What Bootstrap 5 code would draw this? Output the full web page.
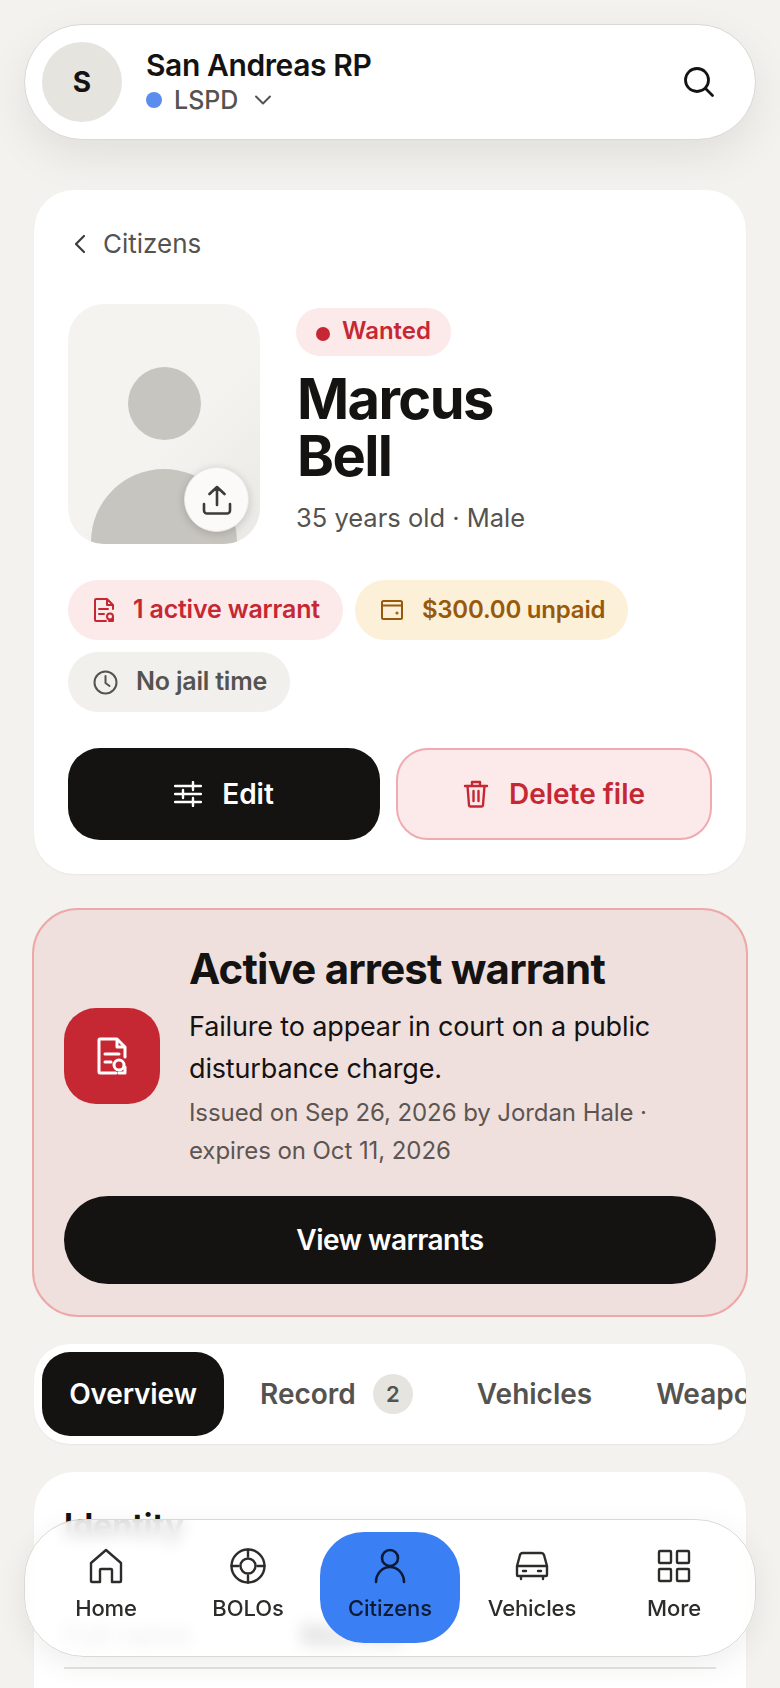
<!DOCTYPE html>
<html lang="en">
<head>
<meta charset="utf-8">
<title>Marcus Bell</title>
<link href="https://cdn.jsdelivr.net/npm/bootstrap@5.3.0/dist/css/bootstrap.min.css" rel="stylesheet">
<style>
html,body{height:1688px;overflow:hidden}
body{background:#f3f2ef;font-family:Inter,"Liberation Sans",sans-serif;color:#141312;position:relative}
.shell{padding:24px 32px 0;height:1688px;overflow:hidden}
.topbar{margin:0 -8px;height:116px;border-radius:58px;background:#fff;border:1px solid #d9d8d3;padding:0 39px 0 17px;box-shadow:0 16px 44px rgba(20,19,18,.08)}
.ava{width:80px;height:80px;border-radius:50%;background:#e6e4df;font-size:28px;font-weight:700}
.org{font-size:30px;font-weight:600;letter-spacing:-.4px;line-height:34px}
.sub{font-size:25px;font-weight:500;color:#55534f;line-height:32px;margin-top:2px}
.blue{width:16px;height:16px;border-radius:50%;background:#5b8def;margin-right:12px}
.panel{background:#fff;border-radius:40px;box-shadow:0 1px 2px rgba(20,19,18,.05)}
.hero{margin:50px 2px 0;height:684px;padding:36px 34px 34px}
.back{font-size:26px;line-height:36px;color:#55534f;margin-left:5px}
.photo{width:192px;height:240px;border-radius:36px;background:linear-gradient(135deg,#f4f3f0 55%,#e9e8e4);position:relative;overflow:hidden;flex:none}
.photowrap{position:relative;flex:none}
.head{position:absolute;left:60px;top:63px;width:73px;height:73px;border-radius:50%;background:#c7c5bf}
.bod{position:absolute;left:23px;top:165px;width:146px;height:146px;border-radius:50%;background:#c7c5bf}
.upl{position:absolute;left:116px;top:163px;width:65px;height:65px;border-radius:50%;background:#fbfaf8;box-shadow:0 2px 8px rgba(20,19,18,.18);border:1px solid #e8e7e3}
.wanted{height:48px;border-radius:24px;background:#fce9ea;color:#c62833;font-size:24px;font-weight:600;padding:0 20px 3px;gap:12px;width:fit-content}
.rdot{width:14px;height:14px;border-radius:50%;background:#c62833;margin-top:6px}
.name{font-size:56px;line-height:57px;font-weight:700;letter-spacing:-1.6px;margin:15px 0 0 1px}
.age{font-size:25.5px;line-height:36px;color:#55534f;margin-top:15px}
.pills{gap:12px;margin-top:36px}
.pilly{height:60px;border-radius:30px;font-weight:600;gap:18px;padding:0 23px 0 25px;letter-spacing:-.2px}
.p-red{background:#fce9ea;color:#c62833;font-size:25px}
.p-amb{background:#fdf0d9;color:#99590a;font-size:24px}
.p-gry{background:#f1f0ed;color:#55534f;font-size:25px}
.acts{gap:16px;margin-top:36px}
.bigbtn{flex:1;height:92px;border-radius:32px;font-size:28px;font-weight:600;gap:20px}
.bigbtn.dark,.pillbtn{background:#141312;color:#fff;border:0}
.bigbtn.dark:hover,.pillbtn:hover{background:#141312;color:#fff}
.bigbtn.del{background:#fce9ea;color:#c62833;border:2px solid #efabb0}
.warn{margin:34px 0 0;height:409px;border-radius:46px;background:#f0e0dd;border:2px solid #eda9a9;padding:32px 30px 0}
.wicon{width:96px;height:96px;border-radius:32px;background:#c62833;flex:none}
.wt{font-size:42px;line-height:54px;font-weight:700;letter-spacing:-.8px}
.wb{font-size:27px;line-height:42px;margin-top:10px;letter-spacing:-.15px}
.ws{font-size:24px;line-height:38px;color:#5c5551;margin-top:4px;letter-spacing:-.08px}
.pillbtn{display:block;width:100%;height:88px;border-radius:44px;font-size:28px;font-weight:600;margin-top:26px;letter-spacing:-.55px}
.tabs{margin:27px 2px 0;height:100px;border-radius:36px;padding:8px;gap:36px;overflow:hidden;font-size:28px;font-weight:600;color:#55534f;white-space:nowrap}
.tabon{width:182px;height:84px;border-radius:28px;background:#141312;color:#fff;flex:none;margin-right:0;letter-spacing:-.15px}
.tcount{width:40px;height:40px;border-radius:50%;background:#e6e4df;font-size:22px;margin-left:17px}
.idcard{margin:28px 2px 0;height:400px;padding:34px 30px}
.idt{font-size:32px;font-weight:700;line-height:40px}
.idrow{padding-top:74px;padding-bottom:17px;border-bottom:2px solid #e6e4df;font-size:28px;line-height:30px;color:#8b8a85;white-space:nowrap}
.idrow b{color:#141312;margin-left:110px;font-weight:700}
.dock{position:absolute;left:24px;top:1519px;width:732px;height:138px;border-radius:60px;background:rgba(255,255,255,.82);backdrop-filter:blur(8px);border:1px solid #d9d8d3;box-shadow:0 8px 30px rgba(20,19,18,.07);padding:12px 11px;gap:2px}
.dockitem{flex:1;height:111px;border-radius:44px;font-size:22px;font-weight:550;letter-spacing:-.1px;color:#2d2c2a;gap:8px;padding-top:16px}
.dockitem.on{background:#3b7ff5;color:#0d1a33}
</style>
</head>
<body>
<div class="shell">
  <header class="topbar d-flex align-items-center">
    <div class="ava d-flex align-items-center justify-content-center">S</div>
    <div class="ms-4 flex-grow-1">
      <div class="org">San Andreas RP</div>
      <div class="sub d-flex align-items-center"><span class="blue"></span>LSPD
        <svg class="ms-3" width="18" height="18" viewBox="0 0 18 18" fill="none" stroke="#55534f" stroke-width="2" stroke-linecap="round" stroke-linejoin="round"><path d="M2 5.5l7 7 7-7"/></svg>
      </div>
    </div>
    <svg width="34" height="34" viewBox="0 0 34 34" fill="none" stroke="#141312" stroke-width="2.8" stroke-linecap="round"><circle cx="15" cy="15" r="11.5"/><path d="M23.5 23.5l7 7"/></svg>
  </header>

  <section class="panel hero">
    <div class="back d-flex align-items-center gap-3">
      <svg width="14" height="20" viewBox="0 0 14 20" fill="none" stroke="#3c3b38" stroke-width="2.2" stroke-linecap="round" stroke-linejoin="round"><path d="M11 2L3 10l8 8"/></svg>
      <span>Citizens</span>
    </div>
    <div class="d-flex" style="margin-top:42px">
      <div class="photowrap">
        <div class="photo"><div class="head"></div><div class="bod"></div></div>
        <div class="upl d-flex align-items-center justify-content-center">
          <svg width="30" height="32" viewBox="0 0 30 32" fill="none" stroke="#3c3b38" stroke-width="2.6" stroke-linecap="round" stroke-linejoin="round"><path d="M15 21V3M7.5 10L15 3l7.5 7M2 20v6.500a3 3 0 0 0 3 3h20a3 3 0 0 0 3-3V20"/></svg>
        </div>
      </div>
      <div style="margin-left:36px;margin-top:4px">
        <div class="wanted d-flex align-items-center"><span class="rdot"></span>Wanted</div>
        <div class="name">Marcus<br>Bell</div>
        <div class="age">35 years old · Male</div>
      </div>
    </div>
    <div class="pills d-flex flex-wrap">
      <div class="pilly p-red d-flex align-items-center">
        <svg width="22" height="26" viewBox="0 0 22 26" fill="none" stroke="currentColor" stroke-width="2" stroke-linecap="round" stroke-linejoin="round"><path d="M20 12V8l-6-6H3a1 1 0 0 0-1 1v20a1 1 0 0 0 1 1h10M14 2v6h6M6 12h9M6 17h5"/><circle cx="17" cy="19.500" r="3"/><path d="M20 20v4h-4"/></svg>
        <span>1 active warrant</span>
      </div>
      <div class="pilly p-amb d-flex align-items-center">
        <svg width="24" height="24" viewBox="0 0 24 24" fill="none" stroke="currentColor" stroke-width="2" stroke-linecap="round" stroke-linejoin="round"><rect x="2" y="3" width="20" height="18" rx="1.500"/><path d="M2 7.500h20"/><circle cx="17" cy="15" r=".6"/></svg>
        <span>$300.00 unpaid</span>
      </div>
      <div class="pilly p-gry d-flex align-items-center">
        <svg width="25" height="25" viewBox="0 0 25 25" fill="none" stroke="currentColor" stroke-width="2" stroke-linecap="round" stroke-linejoin="round"><circle cx="12.500" cy="12.500" r="11"/><path d="M12.500 6v7l4 3"/></svg>
        <span>No jail time</span>
      </div>
    </div>
    <div class="acts d-flex">
      <button class="btn bigbtn dark d-flex align-items-center justify-content-center" type="button">
        <svg width="28" height="26" viewBox="0 0 28 26" fill="none" stroke="#fff" stroke-width="2.400" stroke-linecap="round"><path d="M1 5h26M1 13h26M1 21h26M19 1v8M9 9v8M19 17v8"/></svg>
        Edit
      </button>
      <button class="btn bigbtn del d-flex align-items-center justify-content-center" type="button">
        <svg width="26" height="28" viewBox="0 0 26 28" fill="none" stroke="currentColor" stroke-width="2.400" stroke-linecap="round" stroke-linejoin="round"><path d="M2 6h22M9 6V2h8v4M4.500 6l1.500 19a1.500 1.500 0 0 0 1.500 1.500h11A1.500 1.500 0 0 0 20 25l1.500-19M10.500 11v10M15.500 11v10"/></svg>
        Delete file
      </button>
    </div>
  </section>

  <section class="warn">
    <div class="d-flex align-items-center" style="gap:29px">
      <div class="wicon d-flex align-items-center justify-content-center">
        <svg width="30" height="38" viewBox="0 0 30 38" fill="none" stroke="#fff" stroke-width="3" stroke-linecap="round" stroke-linejoin="round"><path d="M28 20V10l-8-8H3a1 1 0 0 0-1 1v32a1 1 0 0 0 1 1h16M20 2v8h8M8 17h14M8 25h6"/><circle cx="22" cy="28" r="5"/><path d="M28 30v6h-6"/></svg>
      </div>
      <div>
        <div class="wt">Active arrest warrant</div>
        <div class="wb">Failure to appear in court on a public<br>disturbance charge.</div>
        <div class="ws">Issued on Sep 26, 2026 by Jordan Hale ·<br>expires on Oct 11, 2026</div>
      </div>
    </div>
    <button class="btn pillbtn" type="button">View warrants</button>
  </section>

  <nav class="panel tabs d-flex align-items-center">
    <div class="tabon d-flex align-items-center justify-content-center">Overview</div>
    <div class="d-flex align-items-center">Record<span class="tcount d-flex align-items-center justify-content-center">2</span></div>
    <div style="margin-left:28px">Vehicles</div>
    <div style="margin-left:28px">Weapons</div>
  </nav>

  <section class="panel idcard">
    <div class="idt">Identity</div>
    <div class="idrow">Full name<b>Marcus</b></div>
  </section>
</div>

<nav class="dock d-flex align-items-start">
  <div class="dockitem d-flex flex-column align-items-center">
    <svg width="36" height="36" viewBox="0 0 36 36" fill="none" stroke="currentColor" stroke-width="2.400" stroke-linecap="round" stroke-linejoin="round"><path d="M3 15L18 2l15 13v18a1 1 0 0 1-1 1H24V22a1 1 0 0 0-1-1H13a1 1 0 0 0-1 1v12H4a1 1 0 0 1-1-1z"/></svg>
    <span>Home</span>
  </div>
  <div class="dockitem d-flex flex-column align-items-center">
    <svg width="36" height="36" viewBox="0 0 36 36" fill="none" stroke="currentColor" stroke-width="2.400" stroke-linecap="round"><circle cx="18" cy="18" r="16.500"/><circle cx="18" cy="18" r="7.500"/><path d="M18 1.500v7M18 27.500v7M1.500 18h7M27.500 18h7"/></svg>
    <span>BOLOs</span>
  </div>
  <div class="dockitem on d-flex flex-column align-items-center">
    <svg width="36" height="36" viewBox="0 0 36 36" fill="none" stroke="currentColor" stroke-width="2.600" stroke-linecap="round"><circle cx="18" cy="10" r="8"/><path d="M4 34c0-8 6-15 14-15s14 7 14 15"/></svg>
    <span>Citizens</span>
  </div>
  <div class="dockitem d-flex flex-column align-items-center">
    <svg width="36" height="36" viewBox="0 0 36 36" fill="none" stroke="currentColor" stroke-width="2.400" stroke-linecap="round" stroke-linejoin="round"><path d="M3 18l3-11a3 3 0 0 1 3-2h18a3 3 0 0 1 3 2l3 11v9a1 1 0 0 1-1 1H4a1 1 0 0 1-1-1zM3 18h30M7 28v3M29 28v3M9 23h3M24 23h3"/></svg>
    <span>Vehicles</span>
  </div>
  <div class="dockitem d-flex flex-column align-items-center">
    <svg width="36" height="36" viewBox="0 0 36 36" fill="none" stroke="currentColor" stroke-width="2.400" stroke-linejoin="round"><rect x="3" y="3" width="12" height="12" rx="1"/><rect x="21" y="3" width="12" height="12" rx="1"/><rect x="3" y="21" width="12" height="12" rx="1"/><rect x="21" y="21" width="12" height="12" rx="1"/></svg>
    <span>More</span>
  </div>
</nav>
<script src="https://cdn.jsdelivr.net/npm/bootstrap@5.3.0/dist/js/bootstrap.bundle.min.js"></script>
</body>
</html>
